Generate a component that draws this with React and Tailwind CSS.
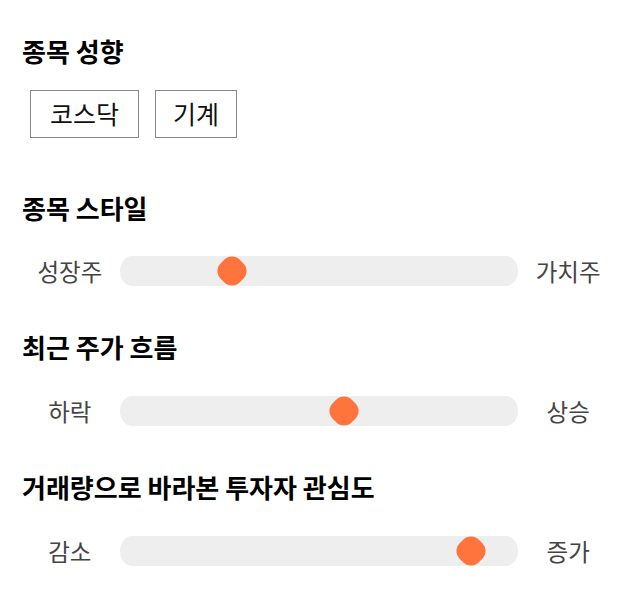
import React from "react";

function Slider({ left, right, pos }) {
  return (
    <div className="flex items-center h-[30px] -ml-[2px]">
      <div className="w-[100px] text-center text-[23.5px] text-[#444] leading-[30px]">{left}</div>
      <div className="relative w-[400px] h-[30px] bg-[#eeeeee] rounded-[12px/15px]">
        <div
          className="absolute top-1/2 w-[27px] h-[27px] bg-[#ff743c] rounded-[11px] -translate-x-1/2 -translate-y-1/2 rotate-45"
          style={{ left: `${pos}px` }}
        />
      </div>
      <div className="w-[100px] text-center text-[23.5px] text-[#444] leading-[30px]">{right}</div>
    </div>
  );
}

export default function App() {
  return (
    <div
      className="w-[640px] h-[606px] bg-white px-[22px] pt-[34px] text-black"
      style={{ fontFamily: '"Noto Sans CJK KR", "Noto Sans", sans-serif' }}
    >
      <h2 className="text-[26px] font-bold leading-[34px]">종목 성향</h2>
      <div className="flex gap-[16px] ml-[8px] mt-[22px]">
        <div className="h-[48px] px-[19px] border border-[#888] flex items-center text-[25px] text-[#111]">코스닥</div>
        <div className="h-[48px] px-[17px] border border-[#888] flex items-center text-[25px] text-[#111]">기계</div>
      </div>

      <h2 className="text-[26px] font-bold leading-[34px] mt-[53px]">종목 스타일</h2>
      <div className="mt-[31px]">
        <Slider left="성장주" right="가치주" pos={112} />
      </div>

      <h2 className="text-[26px] font-bold leading-[34px] mt-[44px]">최근 주가 흐름</h2>
      <div className="mt-[32px]">
        <Slider left="하락" right="상승" pos={224} />
      </div>

      <h2 className="text-[26px] font-bold leading-[34px] mt-[44px]">거래량으로 바라본 투자자 관심도</h2>
      <div className="mt-[32px]">
        <Slider left="감소" right="증가" pos={351} />
      </div>
    </div>
  );
}
